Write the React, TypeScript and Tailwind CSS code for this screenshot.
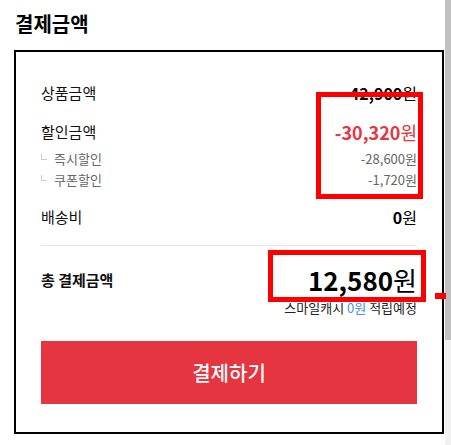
import React from 'react'

const font = { fontFamily: '"Noto Sans CJK KR", "Noto Sans", sans-serif' }

function Row({ label, children }: { label: string; children: React.ReactNode }) {
  return (
    <div className="flex h-[22px] items-center justify-between">
      <span className="text-[15px] text-[#111]">{label}</span>
      {children}
    </div>
  )
}

function SubRow({ label, value }: { label: string; value: string }) {
  return (
    <div className="flex h-[21px] items-center justify-between text-[13px] text-[#666]">
      <div className="flex items-center">
        <span className="mr-[7px] mt-[-4px] h-[6px] w-[6px] border-b border-l border-[#ccc]" />
        <span>{label}</span>
      </div>
      <span>{value}</span>
    </div>
  )
}

export default function App() {
  return (
    <div className="relative flex h-[445px] w-[451px] bg-white" style={font}>
      <div className="flex-1">
        <h2 className="ml-[15px] mt-[10px] h-[28px] text-[20px] font-bold leading-[28px] text-black">
          결제금액
        </h2>

        <div className="ml-[14px] mr-[1px] mt-[12px] border-2 border-black px-[25px] pb-[28px] pt-[30px]">
          <Row label="상품금액">
            <span className="text-[16px] text-black">
              <b>42,900</b>원
            </span>
          </Row>
          <div className="mt-[17px]">
            <Row label="할인금액">
              <span className="text-[18px] text-[#e8353f]">
                <b>-30,320</b>원
              </span>
            </Row>
          </div>
          <div className="mt-[5px]">
            <SubRow label="즉시할인" value="-28,600원" />
            <SubRow label="쿠폰할인" value="-1,720원" />
          </div>
          <div className="mt-[16px]">
            <Row label="배송비">
              <span className="text-[16px] text-black">
                <b>0</b>원
              </span>
            </Row>
          </div>

          <div className="mt-[17px] h-px bg-[#e5e5e5]" />

          {/* 총 결제금액 */}
          <div className="mt-[16px] flex h-[36px] items-center justify-between">
            <span className="text-[15px] font-bold text-[#111]">총 결제금액</span>
            <span className="text-[26px] leading-[36px] text-black">
              <b>12,580</b>원
            </span>
          </div>
          <div className="mt-px h-[18px] text-right text-[13px] leading-[18px] text-[#222]">
            스마일캐시 <span className="text-[#4a90e2]">0원</span> 적립예정
          </div>

          <button className="mt-[24px] h-[63px] w-full bg-[#e53541] text-[20px] font-medium text-white">
            결제하기
          </button>
        </div>
      </div>

      {/* 스크롤바 */}
      <div className="flex w-[6px] flex-col bg-[#f1f1f1]">
        <div className="h-[340px] bg-[#c1c1c1]" />
      </div>

      {/* 표시 박스 */}
      <div className="absolute left-[316px] top-[92px] h-[107px] w-[107px] border-[5px] border-[#ff0000]" />
      <div className="absolute left-[268px] top-[250px] h-[52px] w-[158px] border-[5px] border-[#ff0000]" />
      <div className="absolute left-[435px] top-[293px] h-[6px] w-[11px] bg-[#ff0000]" />
    </div>
  )
}
